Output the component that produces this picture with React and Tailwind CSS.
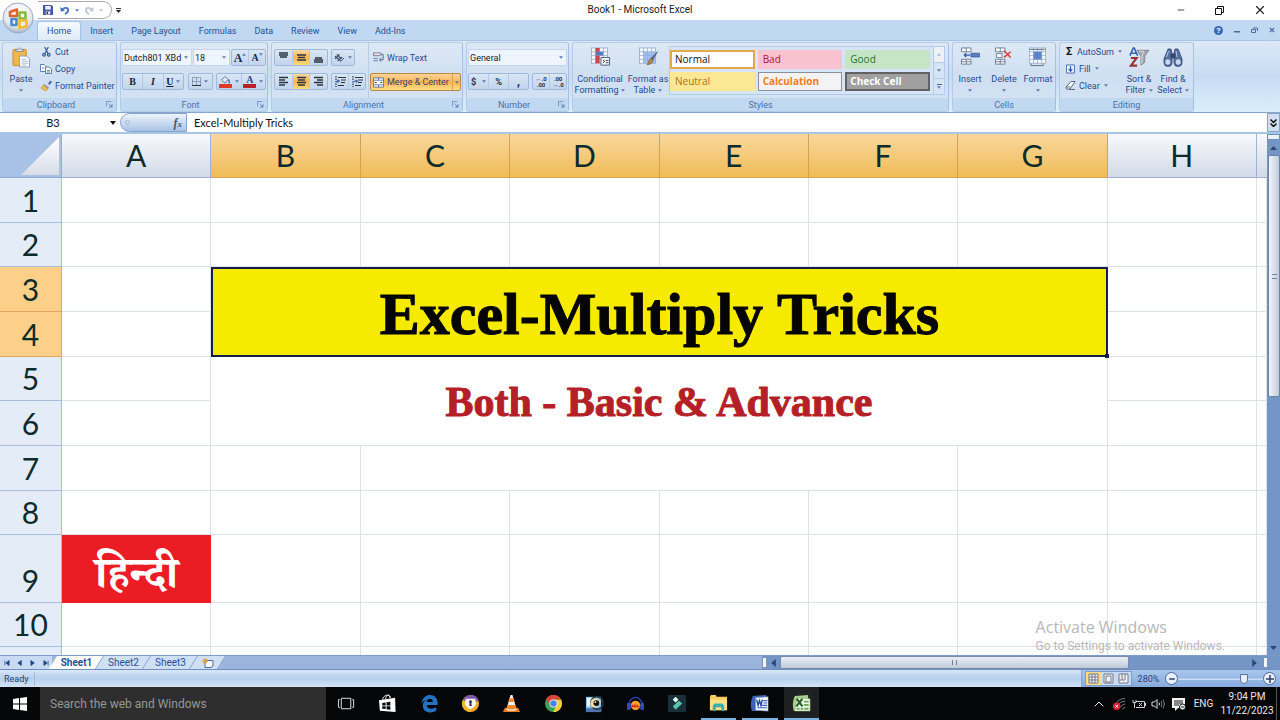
import { useState } from "react";
import { Minus, X, ChevronUp } from "lucide-react";

const uiFont = "font-[Roboto,'Open_Sans',sans-serif]";

const tabs = ["Home", "Insert", "Page Layout", "Formulas", "Data", "Review", "View", "Add-Ins"];

function Caret({ className = "" }) {
  return (
    <svg viewBox="0 0 5 3" className={`w-[4px] h-[3px] shrink-0 ${className}`}>
      <path d="M0 0h5L2.5 3z" fill="#5f7cae" />
    </svg>
  );
}

function Launcher() {
  return (
    <svg viewBox="0 0 8 8" className="w-[7px] h-[7px]" fill="none" stroke="#6f8fbf">
      <path d="M.5 6V.5H6M3 3l3 3" />
      <path d="M7.5 3v4.5H3z" fill="#6f8fbf" stroke="none" />
    </svg>
  );
}

function Group({ label, launcher, className, children }) {
  return (
    <section
      className={`shrink-0 flex flex-col rounded-[3px] border border-[#b3cbe8] border-r-[#a5c0e2] bg-linear-to-b from-[#dde8f5] via-[#cfdff1] to-[#d4e4f5] overflow-hidden ${className}`}
    >
      <div className="h-[55px] flex">{children}</div>
      <div className="h-[13px] flex items-center bg-[#c1d8f1] text-[#4a70ae] px-[3px]">
        <span className="flex-1 text-center">{label}</span>
        {launcher && (
          <button aria-label={`${label} options`}>
            <Launcher />
          </button>
        )}
      </div>
    </section>
  );
}

function SmallButton({ icon, label, caret }) {
  return (
    <button className="h-[17px] flex items-center gap-[3px] whitespace-nowrap">
      <span className="w-[12px] flex justify-center">{icon}</span>
      <span>{label}</span>
      {caret && <Caret className="ml-px" />}
    </button>
  );
}

function BigButton({ icon, lines, className }) {
  return (
    <button className={`flex flex-col items-center pt-[4px] ${className}`}>
      <span className="h-[24px] flex items-start justify-center">{icon}</span>
      <span className="h-[15px] leading-[17px] whitespace-nowrap">{lines[0]}</span>
      <span className="h-[9px] leading-[9px] flex items-center gap-[3px]">
        {lines[1]}
        <Caret />
      </span>
    </button>
  );
}

function Strip({ children, className = "" }) {
  return (
    <div
      className={`h-[17px] flex items-stretch rounded-[2px] border border-[#9fb9dc] bg-linear-to-b from-[#d9e6f5] to-[#c2d5ed] divide-x divide-[#b4c9e5] ${className}`}
    >
      {children}
    </div>
  );
}

function Tool({ label, active, children, className = "" }) {
  return (
    <button
      aria-label={label}
      className={`flex-1 flex items-center justify-center gap-[3px] ${
        active ? "bg-linear-to-b from-[#fbd9a0] via-[#fbb34c] to-[#fddc7c]" : ""
      } ${className}`}
    >
      {children}
    </button>
  );
}

function Combo({ label, value, className }) {
  return (
    <label className={`relative h-[17px] flex items-center bg-[#eef5fc] border border-[#c3d6ee] ${className}`}>
      <select aria-label={label} className="appearance-none w-full h-full pl-[1px] bg-transparent text-[#222] outline-none">
        <option>{value}</option>
      </select>
      <Caret className="absolute right-[3px]" />
    </label>
  );
}

function Lines({ rows, className = "" }) {
  return (
    <svg viewBox="0 0 11 11" className={`w-[11px] h-[11px] ${className}`} stroke="#2c3442" strokeWidth="1.4">
      {rows.map(([x1, x2, y]) => (
        <path key={y} d={`M${x1} ${y}H${x2}`} />
      ))}
    </svg>
  );
}

function IndentIcon({ flip }) {
  return (
    <svg viewBox="0 0 12 11" className="w-[12px] h-[11px]" stroke="#2c3442" fill="none" strokeWidth="1.2">
      <path d="M2 0v11" strokeDasharray="1.5 1" />
      <path d="M4 1.5h8M7 4h5M7 6.5h4M4 9.5h6" />
      <path d={flip ? "M3 5.2h3M5 3.8l1.4 1.4L5 6.6" : "M6 5.2H3M4.5 3.8L3 5.2l1.5 1.4"} stroke="#3b66b0" />
    </svg>
  );
}

function OfficeOrb() {
  return (
    <svg viewBox="0 0 32 32" className="w-[32px] h-[32px]">
      <defs>
        <radialGradient id="orb" cx=".5" cy=".3" r=".7">
          <stop offset="0" stopColor="#fff" />
          <stop offset=".7" stopColor="#e6e9f0" />
          <stop offset="1" stopColor="#a4b2c9" />
        </radialGradient>
      </defs>
      <circle cx="16" cy="16" r="15" fill="url(#orb)" stroke="#9dabc2" />
      <g fill="none" strokeWidth="2.6" strokeLinejoin="round">
        <path d="M8 10l7-2.500v6.500H8z" stroke="#e2602a" />
        <path d="M17.500 10.500h6v6h-6z" stroke="#8aba3c" />
        <path d="M9.500 17h5v6h-5z" stroke="#4b8bd3" />
        <path d="M17.500 18.500h7v6l-7 1.500z" stroke="#f5b92e" />
      </g>
    </svg>
  );
}

function SaveIcon() {
  return (
    <svg viewBox="0 0 11 11" className="w-[10px] h-[10px]">
      <path d="M.5.500h9l1 1v9H.5z" fill="#4a5fb0" stroke="#33408a" />
      <path d="M2.500 1h6v4h-6z" fill="#eef3fb" />
      <path d="M3 7h5v3.500H3z" fill="#dfe6f2" />
      <path d="M4 7.500h1.500v2.500H4z" fill="#26337a" />
    </svg>
  );
}

function UndoIcon({ color, flip }) {
  return (
    <svg viewBox="0 0 11 10" className={`w-[10px] h-[9px] ${flip ? "-scale-x-100" : ""}`}>
      <path d="M2.500 4C5 1 9 1.500 9 4.500 9 6.500 7.500 8 5.500 9" fill="none" stroke={color} strokeWidth="2" />
      <path d="M0 1l1 5.500L5.500 5z" fill={color} />
    </svg>
  );
}

function PasteIcon() {
  return (
    <svg viewBox="0 0 20 22" className="w-[19px] h-[21px]">
      <rect x="1" y="2.500" width="14" height="17" rx="1" fill="#f0b64e" stroke="#c98d2c" />
      <path d="M4 4.500V2.500h2.500a1.500 1.500 0 013 0H12v2z" fill="#e6ebf3" stroke="#6f7a8e" strokeWidth=".8" />
      <path d="M8 9.500h7l3.500 3v8.500H8z" fill="#fff" stroke="#7f93b8" strokeWidth=".9" />
      <path d="M10 13h5M10 15h7M10 17h7M10 19h5" stroke="#8ea8d2" strokeWidth=".8" />
    </svg>
  );
}

function CutIcon() {
  return (
    <svg viewBox="0 0 10 11" className="w-[9px] h-[10px]" fill="none" stroke="#35549a" strokeWidth="1.300">
      <path d="M3 0l3.500 7M7 0L3.500 7" />
      <circle cx="2.300" cy="8.500" r="1.500" />
      <circle cx="7.500" cy="8.500" r="1.500" />
    </svg>
  );
}

function CopyIcon() {
  return (
    <svg viewBox="0 0 12 10" className="w-[12px] h-[10px]" fill="#fff" stroke="#5272b4" strokeWidth=".9">
      <path d="M.5.500H4L6 2.500v5H.5z" />
      <path d="M5.500 3H9l2.500 2v4.500h-6z" />
      <path d="M2 4h2M7 6.500h3M7 8h3" />
    </svg>
  );
}

function PainterIcon() {
  return (
    <svg viewBox="0 0 11 11" className="w-[11px] h-[11px]">
      <path d="M7 3.500L9.500.500 11 2 8.500 5z" fill="#4a64a8" />
      <path d="M3.500 4L8 7.500 7 9 2.500 5z" fill="#8d99b5" />
      <path d="M2.500 5L7 9l-3 2L0 8z" fill="#f0bd4c" stroke="#b98a2c" strokeWidth=".6" />
    </svg>
  );
}

function TableGrid({ children }) {
  return (
    <svg viewBox="0 0 21 21" className="w-[21px] h-[20px]">
      <rect x="1" y="1" width="17" height="16" fill="#f7fafe" stroke="#90a5cc" strokeWidth=".8" />
      <path d="M1 5h17M1 9h17M1 13h17M5.300 1v16M9.500 1v16M13.800 1v16" stroke="#90a5cc" strokeWidth=".8" />
      {children}
    </svg>
  );
}

function CellsIcon({ kind }) {
  return (
    <svg viewBox="0 0 21 20" className="w-[21px] h-[19px]">
      <g fill="#fdfeff" stroke="#62718c" strokeWidth=".9">
        <path d="M1 1h10v4H1zM6 1v4M1 13h10v5H1zM6 13v5M1 15.500h10" />
        {kind === "delete" && <path d="M2 7h6v4H2z" />}
      </g>
      {kind === "insert" && (
        <>
          <path d="M11 6.500h9v4h-9z" fill="#5b7cc4" stroke="#3c5a9f" strokeWidth=".8" />
          <path d="M10 8.500H4M6 6.500l-2 2 2 2" stroke="#2f55a6" fill="none" strokeWidth="1.200" />
        </>
      )}
      {kind === "delete" && <path d="M10 4l7 7M17 5l-7 6" stroke="#db4238" strokeWidth="1.600" />}
    </svg>
  );
}

function SortIcon() {
  return (
    <svg viewBox="0 0 22 22" className="w-[21px] h-[21px]">
      <path d="M1 9L4.500 1h1L9 9M2.500 6.500h5" fill="none" stroke="#3663b5" strokeWidth="1.700" />
      <path d="M2 11.500h6L2 19.500h6.500" fill="none" stroke="#9c2f35" strokeWidth="2.200" />
      <path d="M8.500 3.500H21l-4.500 6V16L12.500 19v-9z" fill="#a4a8ad" stroke="#74797f" strokeWidth=".8" />
      <path d="M10.500 4.500h5l-2 5v8" fill="none" stroke="#dcdfe3" />
    </svg>
  );
}

function FindIcon() {
  return (
    <svg viewBox="0 0 20 20" className="w-[20px] h-[20px]">
      <g stroke="#2d426f" strokeWidth=".8">
        <path d="M5 2h3l1 4v10a3.500 3 0 01-8 0v-4z" fill="#56719f" />
        <path d="M12 2h3l4 10v4a3.500 3 0 01-8 0V6z" fill="#56719f" />
        <path d="M8 7h4v4H8z" fill="#33496f" />
      </g>
      <ellipse cx="4.800" cy="15" rx="2.500" ry="2.800" fill="#c9d9ef" />
      <ellipse cx="15.200" cy="15" rx="2.500" ry="2.800" fill="#c9d9ef" />
      <path d="M5.500 4L3.500 10M13 4l1 6" stroke="#b5c7e4" />
    </svg>
  );
}

function TitleBar() {
  return (
    <header className="h-[20px] shrink-0 flex items-center bg-white pl-[38px] text-[10px] text-[#222]">
      <div className="flex-1 flex items-center">
        <div className="h-[18px] w-[74px] flex items-center gap-[5px] pl-[5px] rounded-r-full border border-[#a9a9ad] border-l-0">
          <button aria-label="Save"><SaveIcon /></button>
          <button aria-label="Undo" className="ml-[2px]"><UndoIcon color="#4a6fc0" /></button>
          <Caret />
          <button aria-label="Redo"><UndoIcon color="#c0c6d0" flip /></button>
          <Caret className="opacity-40" />
        </div>
        <button aria-label="Customize toolbar" className="ml-[4px] flex flex-col items-center gap-px">
          <span className="w-[5px] h-px bg-[#334]" />
          <svg viewBox="0 0 5 3" className="w-[5px] h-[3px]"><path d="M0 0h5L2.500 3z" fill="#223" /></svg>
        </button>
      </div>
      <h1 className="whitespace-nowrap">Book1 - Microsoft Excel</h1>
      <div className="flex-1 flex justify-end items-center pl-[38px]">
        <button aria-label="Minimize" className="w-[39px] flex justify-center"><Minus size={10} strokeWidth={2} /></button>
        <button aria-label="Restore" className="w-[39px] flex justify-center">
          <svg viewBox="0 0 9 9" className="w-[9px] h-[9px]" fill="none" stroke="#111">
            <path d="M.5 2.500h6v6h-6zM2.500 2V.5h6v6H7" />
          </svg>
        </button>
        <button aria-label="Close" className="w-[41px] flex justify-center"><X size={14} strokeWidth={2} /></button>
      </div>
    </header>
  );
}

function TabBar({ active, onSelect }) {
  return (
    <nav className="h-[20px] shrink-0 flex items-end bg-[#c0d8f1] pl-[37px] text-[#2b4e94]">
      {tabs.map((tab) => (
        <button
          key={tab}
          onClick={() => onSelect(tab)}
          className={`h-[19px] px-[9px] rounded-t-[3px] whitespace-nowrap ${
            tab === active ? "bg-linear-to-b from-[#f5fafe] to-[#dfebf7] border border-b-0 border-[#a5c3e8]" : ""
          }`}
        >
          {tab}
        </button>
      ))}
      <div className="ml-auto h-full flex items-center gap-[11px] pr-[5px] text-[#3c5a94]">
        <button aria-label="Help" className="w-[9px] h-[9px] rounded-full bg-[#3768ba] text-white text-[8px] leading-[9px] font-bold">?</button>
        <button aria-label="Minimize workbook"><svg viewBox="0 0 6 6" className="w-[6px] h-[6px]"><path d="M0 4h6v1.500H0z" fill="#51699c" /></svg></button>
        <button aria-label="Restore workbook">
          <svg viewBox="0 0 7 6" className="w-[7px] h-[6px]" fill="none" stroke="#51699c"><path d="M.5 2.500h4v3h-4zM2 1h4.500v3" /></svg>
        </button>
        <button aria-label="Close workbook">
          <svg viewBox="0 0 7 7" className="w-[6px] h-[6px]" stroke="#51699c" strokeWidth="1.500"><path d="M1 1l5 5M6 1L1 6" /></svg>
        </button>
      </div>
    </nav>
  );
}

const cellStyles = [
  { name: "Normal", style: "bg-white text-[#111] ring-2 ring-[#e3a84b] ring-inset" },
  { name: "Bad", style: "bg-[#f8c3cf] text-[#b3122c]" },
  { name: "Good", style: "bg-[#c6e5c4] text-[#1c7430]" },
  { name: "Neutral", style: "bg-[#fce792] text-[#a9741a]" },
  { name: "Calculation", style: "bg-[#f3f3f3] text-[#f07c1d] font-bold ring-1 ring-inset ring-[#8a8f98]" },
  { name: "Check Cell", style: "bg-[#a0a0a0] text-white font-bold ring-2 ring-inset ring-[#626262]" },
];

function Ribbon() {
  return (
    <div className="h-[73px] shrink-0 flex items-start gap-[3px] pl-[2px] pt-px bg-linear-to-b from-[#dbe8f6] via-[#c7dcf2] to-[#d9eefb] border-t border-b border-t-[#a9c5e6] border-b-[#86a6d0] text-[#274a90] overflow-hidden">
      <Group label="Clipboard" launcher className="w-[115px]">
        <BigButton icon={<PasteIcon />} lines={["Paste", ""]} className="w-[36px]" />
        <div className="flex flex-col ml-[1px]">
          <SmallButton icon={<CutIcon />} label="Cut" />
          <SmallButton icon={<CopyIcon />} label="Copy" />
          <SmallButton icon={<PainterIcon />} label="Format Painter" />
        </div>
      </Group>

      <Group label="Font" launcher className="w-[148px]">
        <div className="flex-1 flex flex-col gap-[7px] px-[1px] pt-[6px]">
          <div className="flex gap-[1px]">
            <Combo label="Font name" value="Dutch801 XBd" className="w-[70px]" />
            <Combo label="Font size" value="18" className="w-[37px]" />
            <Strip className="flex-1 text-[#1b2a48] font-[Liberation_Serif,serif] font-bold">
              <Tool label="Grow font"><span className="text-[12px]">A</span><Caret className="-ml-[3px] mb-[6px] rotate-180" /></Tool>
              <Tool label="Shrink font"><span className="text-[10px]">A</span><Caret className="-ml-[3px] mb-[6px]" /></Tool>
            </Strip>
          </div>
          <div className="flex justify-between">
            <Strip className="w-[62px] text-[#15223d] text-[10px] font-[Liberation_Serif,serif] font-bold">
              <Tool label="Bold">B</Tool>
              <Tool label="Italic" className="italic">I</Tool>
              <Tool label="Underline"><span className="underline">U</span><Caret /></Tool>
            </Strip>
            <Strip className="w-[25px]">
              <Tool label="Borders">
                <svg viewBox="0 0 10 10" className="w-[9px] h-[9px]" stroke="#6b7f9f" fill="none"><path d="M.5.500h9v9h-9zM5 0v10M0 5h10" strokeDasharray="1.500 .5" /><path d="M0 9.500h10" stroke="#222" /></svg>
                <Caret />
              </Tool>
            </Strip>
            <Strip className="w-[50px]">
              <Tool label="Fill color">
                <span className="flex flex-col items-center">
                  <svg viewBox="0 0 12 9" className="w-[12px] h-[8px]"><path d="M2 4.500L6 .500 9.500 4 6 8z" fill="#dfe7f3" stroke="#5c6f93" /><path d="M9.500 4c2 1 1.500 3 1 4.500" fill="none" stroke="#3f6cb6" strokeWidth="1.400" /></svg>
                  <span className="w-[13px] h-[4px] bg-[#e03a24]" />
                </span>
                <Caret />
              </Tool>
              <Tool label="Font color">
                <span className="flex flex-col items-center">
                  <span className="text-[10px] leading-[8px] font-bold font-[Liberation_Serif,serif] text-[#284a91]">A</span>
                  <span className="w-[13px] h-[4px] bg-[#bd1f2b]" />
                </span>
                <Caret />
              </Tool>
            </Strip>
          </div>
        </div>
      </Group>

      <Group label="Alignment" launcher className="w-[192px]">
        <div className="flex flex-col gap-[7px] pl-[2px] pt-[6px]">
          <div className="flex gap-[3px]">
            <Strip className="w-[54px]">
              <Tool label="Top align"><Lines rows={[[1, 10, 1], [1, 10, 3], [2, 9, 5]]} /></Tool>
              <Tool label="Middle align" active><Lines rows={[[1, 10, 3], [2, 9, 5.500], [1, 10, 8]]} /></Tool>
              <Tool label="Bottom align"><Lines rows={[[2, 9, 6], [1, 10, 8], [1, 10, 10]]} /></Tool>
            </Strip>
            <Strip className="w-[24px]">
              <Tool label="Orientation">
                <svg viewBox="0 0 12 10" className="w-[11px] h-[10px]" fill="none" stroke="#34415c"><path d="M1 3l6 5M3 1l5 5M1 6l5-5M4 8l5-4" strokeWidth="1.200" /><path d="M7 9l4-4" /></svg>
                <Caret />
              </Tool>
            </Strip>
          </div>
          <div className="flex gap-[3px]">
            <Strip className="w-[54px]">
              <Tool label="Align left"><Lines rows={[[1, 10, 1.500], [1, 7, 4], [1, 10, 6.500], [1, 7, 9]]} /></Tool>
              <Tool label="Center" active><Lines rows={[[1, 10, 1.500], [2, 9, 4], [1, 10, 6.500], [2, 9, 9]]} /></Tool>
              <Tool label="Align right"><Lines rows={[[1, 10, 1.500], [4, 10, 4], [1, 10, 6.500], [4, 10, 9]]} /></Tool>
            </Strip>
            <Strip className="w-[35px]">
              <Tool label="Decrease indent"><IndentIcon /></Tool>
              <Tool label="Increase indent"><IndentIcon flip /></Tool>
            </Strip>
          </div>
        </div>
        <div className="flex-1 flex flex-col gap-[7px] ml-[2px] pl-[1px] pr-[1px] pt-[6px] border-l border-[#b9cde8]">
          <button className="h-[17px] flex items-center gap-[3px] pl-[3px] whitespace-nowrap">
            <svg viewBox="0 0 12 11" className="w-[11px] h-[11px]" fill="none" stroke="#687da5"><path d="M.5.500h8v3h-8zM.5 6.500h5M.5 9h5" fill="#f4e3cc" /><path d="M9 2h2v6H7.500M9 6L7 8l2 2" stroke="#4a5f8a" /></svg>
            Wrap Text
          </button>
          <div className="h-[18px] flex border border-[#b88a45] rounded-[2px] bg-linear-to-b from-[#fcd49a] via-[#fbb452] to-[#fddf86] text-[#3d456b]">
            <button className="flex-1 flex items-center gap-[3px] pl-[2px] whitespace-nowrap">
              <svg viewBox="0 0 12 11" className="w-[11px] h-[11px]" fill="none" stroke="#5974a6"><path d="M.5.500h11v10H.5zM.5 3h11M.5 8h11M6 0v3M6 8v3" fill="#fff" /><path d="M2 5.500h2M8 5.500h2" stroke="#222" /></svg>
              Merge &amp; Center
            </button>
            <button aria-label="Merge options" className="w-[8px] flex items-center justify-center border-l border-[#d5a256]"><Caret /></button>
          </div>
        </div>
      </Group>

      <Group label="Number" launcher className="w-[103px]">
        <div className="flex-1 flex flex-col gap-[7px] px-[1px] pt-[6px]">
          <Combo label="Number format" value="General" className="w-full" />
          <div className="flex justify-between">
            <Strip className="w-[61px] text-[#1c2a48] font-bold">
              <Tool label="Currency">$<Caret className="ml-[3px]" /></Tool>
              <Tool label="Percent">%</Tool>
              <Tool label="Comma" className="text-[12px]">,</Tool>
            </Strip>
            <Strip className="w-[35px] text-[6px] leading-[6px] text-[#26334f] font-bold">
              <Tool label="Increase decimal"><span>←.0<br />.00</span></Tool>
              <Tool label="Decrease decimal"><span>.00<br />→.0</span></Tool>
            </Strip>
          </div>
        </div>
      </Group>

      <Group label="Styles" className="w-[377px]">
        <BigButton
          className="w-[54px]"
          lines={["Conditional", "Formatting"]}
          icon={
            <TableGrid>
              <path d="M5.300 1h4.200v4H5.300zM5.300 9h4.200v8H5.300z" fill="#cf4446" />
              <path d="M5.300 5h8v4h-8z" fill="#5878bd" />
              <path d="M11 11h9v8h-9z" fill="#fff" stroke="#4c5870" />
              <path d="M13 13.500l2 1.500-2 1.500M16 14h3M16 16.500h3" fill="none" stroke="#2b3850" />
            </TableGrid>
          }
        />
        <BigButton
          className="w-[42px]"
          lines={["Format as", "Table"]}
          icon={
            <TableGrid>
              <path d="M5.300 5h12.700v12H5.300z" fill="#8db0e5" fillOpacity=".8" />
              <path d="M20 5l-5 8-2-1z" fill="#5b6d94" stroke="#344769" strokeWidth=".6" />
              <path d="M15 12.500c1 3-2 6-6 6 2-2 1.500-5 4-6.500z" fill="#b78a4a" stroke="#54402a" strokeWidth=".6" />
            </TableGrid>
          }
        />
        <div className="flex-1 my-[3px] mr-[3px] flex border border-[#b5cce9] bg-[#d5e4f6]">
          <div className="flex-1 grid grid-cols-3 content-center gap-x-[3px] gap-y-[3px] pr-[3px] text-[10px] font-['Open_Sans',sans-serif]">
            {cellStyles.map((s) => (
              <button key={s.name} className={`h-[19px] px-[5px] text-left leading-[19px] whitespace-nowrap ${s.style}`}>
                {s.name}
              </button>
            ))}
          </div>
          <div className="w-[11px] flex flex-col border-l border-[#b5cce9] divide-y divide-[#b5cce9]">
            <button aria-label="Styles up" className="flex-1 flex items-center justify-center bg-[#edf1f6]"><Caret className="rotate-180 opacity-50" /></button>
            <button aria-label="Styles down" className="flex-1 flex items-center justify-center"><Caret /></button>
            <button aria-label="More styles" className="flex-1 flex flex-col gap-px items-center justify-center"><span className="w-[5px] h-px bg-[#44649c]" /><Caret /></button>
          </div>
        </div>
      </Group>

      <Group label="Cells" className="w-[104px]">
        <div className="flex-1 flex justify-around">
          <BigButton icon={<CellsIcon kind="insert" />} lines={["Insert", ""]} className="w-[33px]" />
          <BigButton icon={<CellsIcon kind="delete" />} lines={["Delete", ""]} className="w-[33px]" />
          <BigButton
            icon={
              <TableGrid>
                <path d="M5.300 5h8.500v8H5.300z" fill="#5f84cc" />
                <path d="M1 2.500h17M2.500 17.500v2h13v-2" stroke="#62718c" fill="none" />
              </TableGrid>
            }
            lines={["Format", ""]}
            className="w-[33px]"
          />
        </div>
      </Group>

      <Group label="Editing" className="w-[135px]">
        <div className="flex flex-col pl-[4px] w-[62px]">
          <SmallButton icon={<span className="text-[11px] font-bold text-[#111]">Σ</span>} label="AutoSum" caret />
          <SmallButton
            icon={<svg viewBox="0 0 10 10" className="w-[9px] h-[10px]" fill="#e8effa" stroke="#4663a0"><path d="M.5.500h9v9h-9z" /><path d="M5 2v5M3 5l2 2.500L7 5" fill="none" stroke="#2a55ad" strokeWidth="1.300" /></svg>}
            label="Fill"
            caret
          />
          <SmallButton
            icon={<svg viewBox="0 0 11 9" className="w-[11px] h-[9px]" fill="#fff" stroke="#5b6780"><path d="M1 6l5-5.500h4L6 6.500 5 8H1.500z" /><path d="M1 6h4.500M4 8.500h6" /></svg>}
            label="Clear"
            caret
          />
        </div>
        <BigButton icon={<SortIcon />} lines={["Sort &", "Filter"]} className="w-[34px]" />
        <BigButton icon={<FindIcon />} lines={["Find &", "Select"]} className="w-[34px]" />
      </Group>
    </div>
  );
}

function FormulaBar() {
  return (
    <div className="h-[21px] shrink-0 flex items-stretch bg-white border-b-2 border-b-[#a8c5e6] text-[11px] text-[#111] font-[Lato,sans-serif]">
      <input aria-label="Name box" defaultValue="B3" className="w-[106px] text-center outline-none" />
      <button aria-label="Named cells" className="w-[14px] flex items-center justify-center">
        <svg viewBox="0 0 6 4" className="w-[6px] h-[4px]"><path d="M0 0h6L3 4z" fill="#111" /></svg>
      </button>
      <div className="w-[67px] flex items-center justify-between pl-[4px] pr-[4px] mr-[3px] rounded-l-full border border-[#86a3cc] bg-linear-to-b from-[#eef4fb] to-[#a9c3e6]">
        <span className="w-[5px] h-[5px] rounded-full border border-[#a9bad4]" />
        <button aria-label="Insert function" className="italic text-[12px] leading-none font-[Liberation_Serif,serif] font-bold text-[#47566f]">
          f<span className="text-[9px]">x</span>
        </button>
      </div>
      <input aria-label="Formula" defaultValue="Excel-Multiply Tricks" className="flex-1 pl-[4px] outline-none" />
      <button aria-label="Expand formula bar" className="w-[13px] flex items-center justify-center border border-[#86a3cc] bg-[#cfe0f5]">
        <svg viewBox="0 0 7 8" className="w-[7px] h-[8px]" fill="none" stroke="#111" strokeWidth="1.500"><path d="M.5.500l3 3 3-3M.5 4.500l3 3 3-3" /></svg>
      </button>
    </div>
  );
}

const columns = ["A", "B", "C", "D", "E", "F", "G", "H"];
const line = "border-r border-b border-[#dde1ea]";

function RowHeader({ n, selected, className = "h-[45px]" }) {
  return (
    <th
      scope="row"
      className={`p-0 font-normal leading-[43px] border-r border-b align-bottom ${className} ${
        selected ? "bg-[#fdd089] border-[#e0a75a]" : "bg-[#e4ecf7] border-[#a9bcd8]"
      }`}
    >
      {n}
    </th>
  );
}

function Cells({ count }) {
  return Array.from({ length: count }, (_, i) => <td key={i} className={line} />);
}

function Sheet() {
  return (
    <div className="flex-1 min-w-0 overflow-hidden relative bg-white">
      <table className="w-full table-fixed border-separate border-spacing-0 text-[30px] text-[#0c2b2b] font-[Lato,sans-serif]">
        <colgroup>
          <col className="w-[62px]" />
          {columns.map((c) => <col key={c} />)}
          <col className="w-[10px]" />
        </colgroup>
        <thead>
          <tr className="h-[44px]">
            <th className="p-0 bg-[#a8c1e6] border-r border-b border-[#93add3]">
              <svg viewBox="0 0 61 43" className="block w-full h-[43px]">
                <defs>
                  <linearGradient id="corner" x2="0" y2="1">
                    <stop offset="0" stopColor="#fff" />
                    <stop offset="1" stopColor="#d7dde8" />
                  </linearGradient>
                </defs>
                <path d="M59 3v38H21z" fill="url(#corner)" />
              </svg>
            </th>
            {columns.map((c, i) => (
              <th
                key={c}
                scope="col"
                className={`p-0 font-normal leading-[43px] border-r border-b align-bottom ${
                  i > 0 && i < 7
                    ? "bg-linear-to-b from-[#f9d79b] to-[#f0bc55] border-[#d9a04e]"
                    : "bg-linear-to-b from-[#f6f9fc] to-[#d3dae8] border-[#9eb3d3]"
                }`}
              >
                {c}
              </th>
            ))}
            <th className="bg-linear-to-b from-[#f6f9fc] to-[#d3dae8] border-b border-[#9eb3d3]" />
          </tr>
        </thead>
        <tbody>
          <tr><RowHeader n="1" /><Cells count={9} /></tr>
          <tr><RowHeader n="2" className="h-[44px]" /><Cells count={9} /></tr>
          <tr>
            <RowHeader n="3" selected />
            <Cells count={1} />
            <td
              colSpan={6}
              rowSpan={2}
              className="relative p-0 pt-[4px] bg-[#f6ea00] border-2 border-[#14204a] text-center text-[60px] leading-[60px] font-bold font-['Liberation_Serif',serif] text-[#050505] [-webkit-text-stroke:1px_#050505]"
            >
              Excel-Multiply Tricks
              <span className="absolute -right-[3px] -bottom-[3px] w-[4px] h-[4px] bg-[#14204a]" />
            </td>
            <Cells count={2} />
          </tr>
          <tr><RowHeader n="4" selected /><Cells count={3} /></tr>
          <tr>
            <RowHeader n="5" className="h-[44px]" />
            <Cells count={1} />
            <td
              colSpan={6}
              rowSpan={2}
              className={`p-0 pt-[2px] text-center text-[42px] leading-[44px] font-bold font-['Liberation_Serif',serif] text-[#b51f27] [-webkit-text-stroke:1px_#b51f27] ${line}`}
            >
              Both - Basic &amp; Advance
            </td>
            <Cells count={2} />
          </tr>
          <tr><RowHeader n="6" /><Cells count={3} /></tr>
          <tr>
            <RowHeader n="7" />
            <Cells count={2} />
            <td colSpan={4} className={line} />
            <Cells count={3} />
          </tr>
          <tr><RowHeader n="8" className="h-[44px]" /><Cells count={9} /></tr>
          <tr>
            <RowHeader n="9" className="h-[68px]" />
            <td className="p-0 pt-[24px] bg-[#ec1c24] text-center text-white font-bold text-[45px] leading-[44px] font-['Noto_Serif_Devanagari','Noto_Sans_Devanagari','Noto_Sans',serif]">
              हिन्दी
            </td>
            <Cells count={8} />
          </tr>
          <tr><RowHeader n="10" className="h-[44px]" /><Cells count={9} /></tr>
          <tr><RowHeader n="" /><Cells count={9} /></tr>
        </tbody>
      </table>
      {/* watermark floats over the cells */}
      <div className="absolute right-[42px] bottom-0 text-[#b8b8b8]">
        <p className="text-[16px] leading-[20px] font-['Open_Sans',sans-serif]">Activate Windows</p>
        <p className="text-[12px] leading-[18px] whitespace-nowrap">Go to Settings to activate Windows.</p>
      </div>
    </div>
  );
}

function VerticalScroll() {
  return (
    <div className="w-[13px] shrink-0 flex flex-col bg-[#7396c6]">
      <div className="h-[6px] border border-[#6c8fc2] bg-[#e8f0fa]" />
      <button aria-label="Scroll up" className="h-[15px] flex items-center justify-center"><svg viewBox="0 0 7 4" className="w-[7px] h-[4px]"><path d="M0 4h7L3.500 0z" fill="#2c4675" /></svg></button>
      <div className="h-[242px] ml-px flex items-center justify-center rounded-[2px] border border-[#6f83a6] bg-linear-to-r from-[#f3f6fa] to-[#bfcbdd]">
        <span className="w-[5px] h-[5px] border-y border-[#73849f]" />
      </div>
      <button aria-label="Scroll down" className="mt-auto h-[15px] flex items-center justify-center"><svg viewBox="0 0 7 4" className="w-[7px] h-[4px]"><path d="M0 0h7L3.500 4z" fill="#2c4675" /></svg></button>
    </div>
  );
}

function SheetTabs() {
  const [sheet, setSheet] = useState("Sheet1");
  return (
    <div className="h-[14px] shrink-0 flex items-stretch bg-[#9bb4dd] border-t border-[#7f9cc9] text-[#2b4f93] overflow-hidden">
      <div className="w-[53px] shrink-0 flex items-center justify-around bg-[#c9dbf2] border-r border-[#9ab3d7]">
        {["M1 0v6M6 0v6L2 3z", "M5 0v6L1 3z", "M1 0v6l4-3z", "M1 0v6l4-3zM6 0v6"].map((d) => (
          <button key={d} aria-label="Scroll sheets">
            <svg viewBox="0 0 7 6" className="w-[6px] h-[6px]" fill="#25457f" stroke="#25457f" strokeWidth=".8"><path d={d} /></svg>
          </button>
        ))}
      </div>
      <div className="isolate flex">
        {["Sheet1", "Sheet2", "Sheet3"].map((name) => (
          <button
            key={name}
            onClick={() => setSheet(name)}
            className={`relative w-[47px] leading-[13px] text-[10px] before:absolute before:inset-0 before:-z-10 before:-skew-x-[32deg] before:border-r before:border-[#7f9cc9] ${
              name === sheet ? "font-bold before:bg-white" : "before:bg-[#cfe0f5]"
            }`}
          >
            {name}
          </button>
        ))}
        <button aria-label="Insert sheet" className="relative w-[28px] flex items-center justify-center before:absolute before:inset-0 before:-z-10 before:-skew-x-[32deg] before:border-r before:border-[#7f9cc9] before:bg-[#cfe0f5]">
          <svg viewBox="0 0 12 10" className="w-[12px] h-[10px]"><path d="M3 2.500h8v5.500L9 9.500H3z" fill="#f5f8fd" stroke="#556b98" /><path d="M3 0v6M0 3h6M1 1l4 4M5 1L1 5" stroke="#e59a2c" /></svg>
        </button>
      </div>
      <div className="ml-auto w-[518px] flex bg-[#7396c6]">
        <span className="w-[5px] my-px bg-[#f0f5fb] border border-[#7f94b6]" />
        <button aria-label="Scroll left" className="w-[13px] flex items-center justify-center"><svg viewBox="0 0 4 7" className="w-[5px] h-[8px]"><path d="M4 0v7L0 3.500z" fill="#2c4675" /></svg></button>
        <div className="w-[349px] flex items-center justify-center rounded-[2px] border border-[#7c8ca8] bg-linear-to-b from-[#eceff5] to-[#bfc9da]">
          <span className="w-[5px] h-[5px] border-x border-[#73849f]" />
        </div>
        <button aria-label="Scroll right" className="ml-auto w-[18px] flex items-center justify-center"><svg viewBox="0 0 4 7" className="w-[5px] h-[8px]"><path d="M0 0v7l4-3.500z" fill="#2c4675" /></svg></button>
        <span className="w-[5px] my-px mr-[12px] bg-[#f0f5fb] border border-[#7f94b6]" />
      </div>
    </div>
  );
}

function StatusBar() {
  return (
    <footer className="h-[18px] shrink-0 flex items-center bg-linear-to-b from-[#d8e7f8] via-[#b5d0ee] to-[#d5e4f6] border-t border-[#6f8fbe] text-[#2b4371]">
      <span className="w-[35px] h-[14px] leading-[15px] pl-[4px] border-r border-[#a3bcdf]">Ready</span>
      <div className="ml-auto h-full flex items-center bg-linear-to-b from-[#a9c7ec] to-[#86aade] border-l border-[#87a6d3] pl-[3px]">
        <div className="flex h-[15px] border border-[#7e9cca] bg-[#c8dbf3]">
          {["M1 1h9v9H1zM1 4h9M1 7h9M4 1v9M7 1v9", "M1 1h9v9H1zM3 3h5v6H3z", "M1 1h9v9H1zM4 1v6M7 1v6H1"].map((d, i) => (
            <button key={d} aria-label="View mode" className={`w-[15px] flex items-center justify-center ${i === 0 ? "bg-[#fcd98c]" : ""}`}>
              <svg viewBox="0 0 11 11" className="w-[11px] h-[11px]" fill="#f1f3f7" stroke="#707886"><path d={d} /></svg>
            </button>
          ))}
        </div>
        <button className="w-[33px] text-center">280%</button>
        <button aria-label="Zoom out" className="w-[13px] h-[13px] rounded-full border border-[#50689a] bg-[#e9f0fa] flex items-center justify-center"><Minus size={8} strokeWidth={4} /></button>
        <input
          type="range"
          aria-label="Zoom"
          min="0"
          max="100"
          defaultValue="80"
          className="w-[85px] h-[14px] appearance-none bg-linear-to-b from-transparent from-45% via-[#e9f1fb] to-transparent to-60% [&::-webkit-slider-thumb]:appearance-none [&::-webkit-slider-thumb]:w-[8px] [&::-webkit-slider-thumb]:h-[10px] [&::-webkit-slider-thumb]:rounded-b-[4px] [&::-webkit-slider-thumb]:border [&::-webkit-slider-thumb]:border-[#5a719f] [&::-webkit-slider-thumb]:bg-[#e6eefa]"
        />
        <button aria-label="Zoom in" className="w-[13px] h-[13px] mr-[4px] rounded-full border border-[#50689a] bg-[#e9f0fa] flex items-center justify-center">
          <svg viewBox="0 0 8 8" className="w-[8px] h-[8px]" stroke="#2c4270" strokeWidth="1.500"><path d="M0 4h8M4 0v8" /></svg>
        </button>
      </div>
    </footer>
  );
}

const apps = [
  {
    name: "Task View",
    icon: <g fill="none" stroke="#e8e8e8"><path d="M4.500 4.500h10v11h-10zM3 6H1.500v8H3M16 6h1.500v8H16" /></g>,
  },
  {
    name: "Store",
    icon: (
      <g>
        <path d="M1 6.500l17-2.500.5 15L2 17.500z" fill="#fff" />
        <path d="M5 6c0-5 8-7 8-2M8 5.500C8 1 12 0 12.500 4" fill="none" stroke="#fff" />
        <path d="M4.500 9.500l3.500-.5v3H4.500zM9 8.800l4-.6V12H9zM4.500 12.800H8v3L4.500 15.500zM9 12.800h4v3.700l-4-.5z" fill="#050607" />
      </g>
    ),
  },
  {
    name: "Edge",
    icon: <path d="M1.500 9.500C3 3.500 6.500 1 10.500 1c5 0 8 3.500 8 8.500v2H7c.3 3 2.500 4 5 4 2 0 3.500-.5 5-1.500v4c-2 1-4 1.500-6 1.500-5 0-8-3-8-7.500 0-3 1.500-5 4-6-2.500.5-4 2-5.500 3.500zM7 8.500h6.500C13.500 6 12 5 10.300 5 8.500 5 7.300 6.300 7 8.500z" fill="#2273c4" />,
  },
  {
    name: "Secure Browser",
    icon: (
      <g>
        <circle cx="10" cy="10" r="9" fill="#f3a82c" />
        <path d="M2 6A9 9 0 0118.500 7L10 10z" fill="#7a5aae" />
        <path d="M1.500 7A9 9 0 0010 19l1-6z" fill="#f5b52a" />
        <path d="M5 5l10 0 1 5c-1 3-3 5-6 6-3-1-5-3-6-6z" fill="#f8f3f4" />
        <path d="M10 6.500a1.500 1.500 0 01.9 2.700L11.200 12.500H8.800l.3-3.300A1.500 1.500 0 0110 6.500z" fill="#36275b" />
      </g>
    ),
  },
  {
    name: "VLC",
    icon: (
      <g>
        <path d="M3 14.500h14l2 4.500H1z" fill="#e77d20" />
        <path d="M9 1h2l4.500 15.500c-2 1.500-9 1.500-11 0z" fill="#f2f2ef" />
        <path d="M8 4.500h4l1.200 4H6.800zM6 11.500h8l1.200 4c-2 1-8.500 1-10.400 0z" fill="#f08a2b" />
      </g>
    ),
  },
  {
    name: "Chrome",
    icon: (
      <g>
        <circle cx="10" cy="10" r="9" fill="#35a554" />
        <path d="M2.200 5.500A9 9 0 0118 6H10L6.500 12z" fill="#dd4435" />
        <path d="M18 6a9 9 0 01-8.500 13l4-7L10 6z" fill="#fbcb3b" />
        <circle cx="10" cy="10" r="4.300" fill="#fff" />
        <circle cx="10" cy="10" r="3.400" fill="#4782ea" />
      </g>
    ),
  },
  {
    name: "Media Player",
    icon: (
      <g>
        <path d="M1 3h16v16H1z" fill="#8fc0e6" />
        <path d="M2 4h5v9H2z" fill="#e9f2f8" />
        <path d="M1 15h16v4H1z" fill="#4f72ae" />
        <circle cx="12.500" cy="9.500" r="6.500" fill="none" stroke="#1d3a4a" strokeWidth="1.600" />
        <path d="M7 6c4-3 7-1 10 3-3 4-6 6-10 5-2-3-2-5 0-8z" fill="#ecd6a6" />
        <circle cx="12" cy="9.500" r="3" fill="#111" />
        <circle cx="11" cy="8.500" r="1" fill="#fff" />
      </g>
    ),
  },
  {
    name: "Audacity",
    icon: (
      <g>
        <path d="M3 12a7 8.500 0 0114 0" fill="none" stroke="#26389e" strokeWidth="1.800" />
        <rect x="1" y="9" width="4" height="8" rx="2" fill="#3148b8" />
        <rect x="15" y="9" width="4" height="8" rx="2" fill="#3148b8" />
        <ellipse cx="10" cy="12" rx="5" ry="5" fill="#f3a028" />
        <path d="M5.500 12l1.500-1 1 2 1.500-3 1 3 1.500-2 1 2 1-1v2h-8.500z" fill="#d92a20" />
      </g>
    ),
  },
  {
    name: "Filmora",
    icon: (
      <g>
        <path d="M0 1h19v18H0z" fill="#183039" />
        <path d="M8 3l3 3L8 9 5 6z" fill="#f1fbfa" />
        <path d="M11.500 7l3.500 3-7 6.500-3-3.500z" fill="#5bc2ae" />
      </g>
    ),
  },
  {
    name: "File Explorer",
    running: true,
    icon: (
      <g>
        <path d="M1 3l1-2h5l1 2h11v14H1z" fill="#f6cf62" />
        <path d="M1 6h18v11H1z" fill="#fbdf87" />
        <path d="M4 18v-6l2-2h8l2 2v6h-3v-4H7v4z" fill="#35aeb7" />
      </g>
    ),
  },
  {
    name: "Word",
    running: true,
    icon: (
      <g>
        <path d="M3 2l14-1v4L8 18H2C0 12 1 6 3 2z" fill="#3e62b2" />
        <path d="M6 4l13-1v15l-13-1z" fill="#f3f7fc" stroke="#90a9d4" strokeWidth=".6" />
        <path d="M7 6l1.500 6L10 7l1.500 5L13 6" fill="none" stroke="#27479a" strokeWidth="1.500" />
        <path d="M14 7h4M14 9.500h4M12 12h6M8 14.500h10" stroke="#3b62b5" strokeWidth="1.200" />
      </g>
    ),
  },
  {
    name: "Excel",
    running: true,
    active: true,
    icon: (
      <g>
        <path d="M3 2l14-1v4L8 18H2C0 12 1 6 3 2z" fill="#a8cf8d" />
        <path d="M5 4l14 1v13H3z" fill="#f2f8ec" stroke="#78a960" strokeWidth=".6" />
        <path d="M5 5l6 8M11 5l-6.500 8" stroke="#286126" strokeWidth="2.200" />
        <path d="M12.500 7h5v2h-5zM12.500 10.500h5v2h-5zM5 14.500h3v2H5zM9 14.500h3v2H9zM13 14.500h4.500v2H13z" fill="#71a95a" />
      </g>
    ),
  },
];

function Taskbar() {
  return (
    <div className="h-[33px] shrink-0 flex items-stretch bg-[#050607] text-[#e8e8e8]">
      <button aria-label="Start" className="w-[40px] flex items-center justify-center">
        <svg viewBox="0 0 14 14" className="w-[14px] h-[14px]" fill="#fff"><path d="M0 2l6-1v5.500H0zM7 .900L14 0v6.500H7zM0 7.500h6V13l-6-1zM7 7.500h7V14l-7-1z" /></svg>
      </button>
      <input
        aria-label="Search"
        placeholder="Search the web and Windows"
        className="w-[286px] pl-[10px] bg-[#2e2e2e] text-[12px] placeholder:text-[#979797] outline-none"
      />
      <div className="w-[496px] flex">
        {apps.map((app) => (
          <button
            key={app.name}
            aria-label={app.name}
            className={`flex-1 mx-[3px] flex items-center justify-center border-y-2 border-t-transparent ${
              app.running ? "border-b-[#79b3e2]" : "border-b-transparent"
            } ${app.active ? "bg-[#1f2021]" : ""}`}
          >
            <svg viewBox="0 0 20 20" className="w-[19px] h-[19px]">{app.icon}</svg>
          </button>
        ))}
      </div>
      <div className="ml-auto flex items-center text-[10px]">
        <button aria-label="Hidden icons" className="w-[20px] flex justify-center"><ChevronUp size={16} strokeWidth={1.500} /></button>
        <button aria-label="Network" className="w-[20px] flex justify-center">
          <svg viewBox="0 0 14 14" className="w-[13px] h-[13px]" fill="none" stroke="#898989"><path d="M3 7C6 3 9 2 13 1.500M5 9c2-3 4-4 8-4.500M8 11c1-2 3-3 5-3.500M10 13l3-2" /><circle cx="4" cy="10" r="4" fill="#d9222f" stroke="none" /><path d="M2.500 8.500l3 3M5.500 8.500l-3 3" stroke="#fff" /></svg>
        </button>
        <button aria-label="Battery" className="w-[19px] flex justify-center">
          <svg viewBox="0 0 14 10" className="w-[14px] h-[10px]" fill="none" stroke="#d0d0d0"><path d="M4 2.500h8.500v6H4M13.500 4v3M7 4l3 3M10 4L7 7M1 1v2.500h3V1M2.500 3.500V9" /></svg>
        </button>
        <button aria-label="Volume" className="w-[20px] flex justify-center">
          <svg viewBox="0 0 14 12" className="w-[14px] h-[12px]" fill="none" stroke="#d8d8d8"><path d="M1 4h2.500L6 1.500v9L3.500 8H1zM8 4.500q1 1.500 0 3" /><path d="M10 3q2 3 0 6M12 1.500q3 4.500 0 9" stroke="#777" /></svg>
        </button>
        <button aria-label="Notifications" className="w-[21px] flex justify-center">
          <svg viewBox="0 0 14 14" className="w-[14px] h-[14px]"><path d="M0 1h13v10H6l-3 3v-3H0z" fill="#f4f4f4" /><path d="M2 4h9M2 6h9M2 8h5" stroke="#1b1b1b" /><circle cx="10.500" cy="10" r="3" fill="#f4f4f4" stroke="#111" /><path d="M9 10h3" stroke="#111" /></svg>
        </button>
        <span className="w-[29px] text-center">ENG</span>
        <time className="w-[58px] text-center leading-[14px] whitespace-nowrap">9:04 PM<br />11/22/2023</time>
        <span className="w-[4px] h-full border-l border-[#555]" />
      </div>
    </div>
  );
}

export default function App() {
  const [tab, setTab] = useState("Home");

  return (
    <div className={`relative h-screen flex flex-col overflow-hidden text-[9px] leading-[12px] ${uiFont}`}>
      <TitleBar />
      <TabBar active={tab} onSelect={setTab} />
      <button aria-label="Office menu" className="absolute left-[2px] top-[2px]">
        <OfficeOrb />
      </button>
      <Ribbon />
      <FormulaBar />
      <main className="flex-1 min-h-0 flex">
        <Sheet />
        <VerticalScroll />
      </main>
      <SheetTabs />
      <StatusBar />
      <Taskbar />
    </div>
  );
}
